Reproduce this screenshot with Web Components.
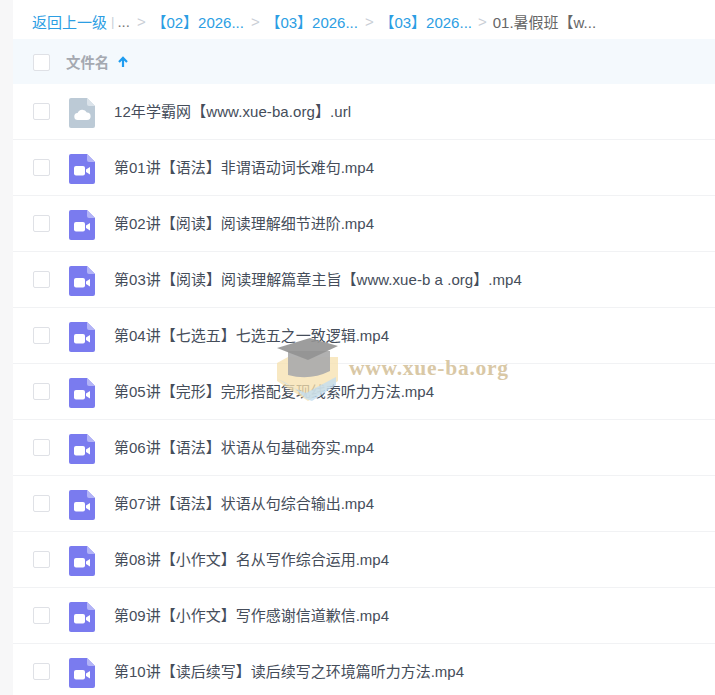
<!DOCTYPE html>
<html>
<head>
<meta charset="utf-8">
<style>
html, body { margin: 0; padding: 0; background: #f7f7f8; }
body { width: 715px; height: 695px; overflow: hidden; font-family: "Liberation Sans", "Noto Sans CJK SC", sans-serif; }
</style>
</head>
<body>
<file-page>
  <crumb-bar></crumb-bar>
  <list-head></list-head>
  <file-row type="url" style="letter-spacing:.08px" name="12年学霸网【www.xue-ba.org】.url"></file-row>
  <file-row type="video" name="第01讲【语法】非谓语动词长难句.mp4"></file-row>
  <file-row type="video" name="第02讲【阅读】阅读理解细节进阶.mp4"></file-row>
  <file-row type="video" style="letter-spacing:.05px" name="第03讲【阅读】阅读理解篇章主旨【www.xue-b a .org】.mp4"></file-row>
  <file-row type="video" name="第04讲【七选五】七选五之一致逻辑.mp4"></file-row>
  <file-row type="video" name="第05讲【完形】完形搭配复现线索听力方法.mp4"></file-row>
  <file-row type="video" name="第06讲【语法】状语从句基础夯实.mp4"></file-row>
  <file-row type="video" name="第07讲【语法】状语从句综合输出.mp4"></file-row>
  <file-row type="video" name="第08讲【小作文】名从写作综合运用.mp4"></file-row>
  <file-row type="video" name="第09讲【小作文】写作感谢信道歉信.mp4"></file-row>
  <file-row type="video" name="第10讲【读后续写】读后续写之环境篇听力方法.mp4"></file-row>
  <water-mark></water-mark>
</file-page>

<script>
class FilePage extends HTMLElement {
  constructor() {
    super();
    this.attachShadow({mode: "open"}).innerHTML = `
<style>
:host { display: block; position: relative; margin-left: 13px; width: 702px; height: 695px; background: #fff; overflow: hidden; }
</style>
<slot></slot>`;
  }
}

class CrumbBar extends HTMLElement {
  constructor() {
    super();
    this.attachShadow({mode: "open"}).innerHTML = `
<style>
:host { display: flex; align-items: center; height: 39px; padding: 4px 0 0 19px; box-sizing: border-box; font-size: 15px; color: #666; white-space: nowrap; }
a { color: #2c9ee3; }
.bar { color: #c8d0d8; margin: 0 3px 0 4px; font-size: 13px; }
.sep { color: #c9ced6; margin: 0 5.7px 0 7px; }
.sep.last { margin: 0 6px 0 6px; }
.dots { color: #777; }
</style>
<a>返回上一级</a><span class="bar">|</span><span class="dots">...</span>
<span class="sep">&gt;</span><a>【02】2026...</a>
<span class="sep">&gt;</span><a>【03】2026...</a>
<span class="sep">&gt;</span><a>【03】2026...</a>
<span class="sep last">&gt;</span><span>01.暑假班【w...</span>`;
  }
}

class TickBox extends HTMLElement {
  constructor() {
    super();
    this.attachShadow({mode: "open"}).innerHTML = `
<style>
:host { display: block; width: 17px; height: 17px; box-sizing: border-box; border: 1px solid #dfe1e6; border-radius: 2px; background: #fff; flex: none; }
</style>`;
  }
}

class ListHead extends HTMLElement {
  constructor() {
    super();
    this.attachShadow({mode: "open"}).innerHTML = `
<style>
:host { display: flex; align-items: center; height: 45px; padding-left: 20px; background: #f4f9fd; font-size: 14.4px; font-weight: bold; color: #a5a9b1; }
tick-box { margin-top: 2px; }
span { margin-left: 16px; margin-bottom: 1px; }
svg { margin-left: 8px; }
</style>
<tick-box></tick-box><span>文件名</span>
<svg width="12" height="12" viewBox="0 0 12 12"><path d="M6 11V2M2 6l4-4.2L10 6" fill="none" stroke="#1e9cf0" stroke-width="2.2"/></svg>`;
  }
}

const videoIcon = `<svg width="26" height="30" viewBox="0 0 26 30">
<path d="M2 0H18L26 8V28a2 2 0 0 1-2 2H2a2 2 0 0 1-2-2V2a2 2 0 0 1 2-2Z" fill="#7a7bef"/>
<path d="M18 0L26 8H20a2 2 0 0 1-2-2Z" fill="#b3b4f7"/>
<rect x="5" y="12" width="11" height="9.5" rx="2" fill="#fff"/>
<path d="M17 15.5L21 13V20.5L17 18Z" fill="#fff"/>
</svg>`;

const urlIcon = `<svg width="26" height="30" viewBox="0 0 26 30">
<path d="M2 0H18L26 8V28a2 2 0 0 1-2 2H2a2 2 0 0 1-2-2V2a2 2 0 0 1 2-2Z" fill="#bccad6"/>
<path d="M18 0L26 8H20a2 2 0 0 1-2-2Z" fill="#dbe3ea"/>
<path d="M9 22a3.5 3.5 0 0 1-.4-7 5 5 0 0 1 9.2-.4A3.7 3.7 0 0 1 18 22Z" fill="#fff"/>
</svg>`;

class FileRow extends HTMLElement {
  constructor() {
    super();
    this.attachShadow({mode: "open"}).innerHTML = `
<style>
:host { display: flex; align-items: center; height: 56px; box-sizing: border-box; padding-left: 20px; border-bottom: 1px solid #f1f2f4; font-size: 15px; color: #454d5a; white-space: nowrap; }
.icon { margin: 2px 0 0 19px; width: 26px; height: 30px; display: flex; }
.name { margin: 0 0 2px 19px; }
</style>
<tick-box></tick-box><div class="icon"></div><div class="name"></div>`;
  }
  connectedCallback() {
    const root = this.shadowRoot;
    root.querySelector(".icon").innerHTML = this.getAttribute("type") === "url" ? urlIcon : videoIcon;
    root.querySelector(".name").textContent = this.getAttribute("name");
  }
}

class WaterMark extends HTMLElement {
  constructor() {
    super();
    this.attachShadow({mode: "open"}).innerHTML = `
<style>
:host { position: absolute; left: 263px; top: 335px; display: flex; align-items: flex-start; pointer-events: none; }
span { font-family: "Liberation Serif", serif; font-weight: bold; font-size: 21.5px; letter-spacing: .75px; line-height: 24px; color: #d9c8a6; margin: 21px 0 0 7px; }
</style>
<svg width="66" height="68" viewBox="0 0 66 68">
<path d="M1 28L12 22H62V46Q48 56 32 66Q16 56 1 46Z" fill="#f6e0ae" opacity=".75"/>
<path d="M2 44Q20 52 30 64L36 66L60 50L60 42L30 58Q14 52 2 44Z" fill="#c3ddf0" opacity=".8"/>
<path d="M12 16V40Q34 46 54 36V16Z" fill="#adadad" opacity=".95"/>
<path d="M1 13L34 3L62 11L32 25Z" fill="#929292" opacity=".9"/>
</svg>
<span>www.xue-ba.org</span>`;
  }
}

customElements.define("file-page", FilePage);
customElements.define("crumb-bar", CrumbBar);
customElements.define("tick-box", TickBox);
customElements.define("list-head", ListHead);
customElements.define("file-row", FileRow);
customElements.define("water-mark", WaterMark);
</script>
</body>
</html>
